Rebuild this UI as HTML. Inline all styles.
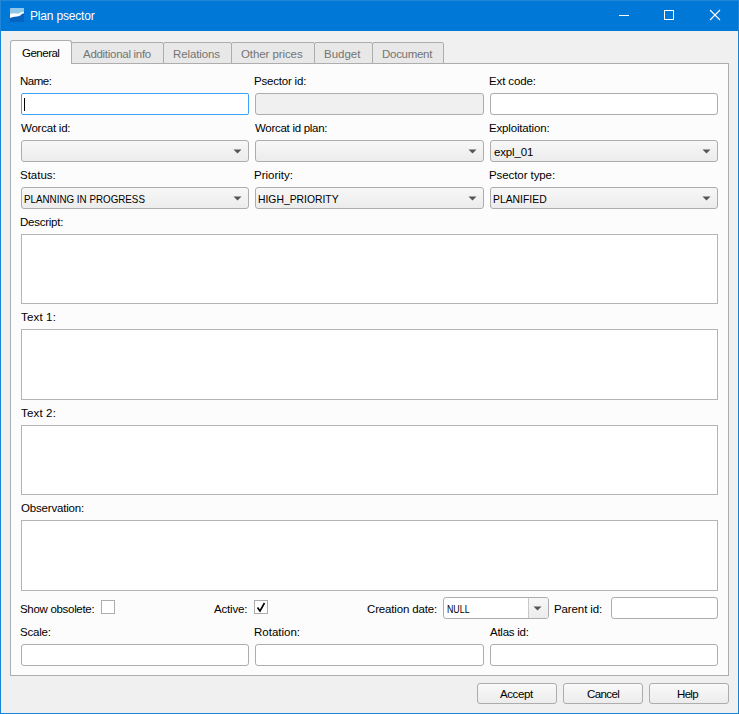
<!DOCTYPE html><html><head><meta charset="utf-8"><style>
html,body{margin:0;padding:0;width:739px;height:714px;overflow:hidden;background:#f0f0f0}
body{position:relative;font-family:"Liberation Sans",sans-serif}
.b{position:absolute;box-sizing:border-box}
.t{position:absolute;white-space:nowrap}
</style></head><body>
<div class="b" style="left:0px;top:0px;width:739px;height:31px;background:#0078d7"></div>
<div class="b" style="left:0px;top:31px;width:739px;height:683px;background:#f0f0f0;border:1px solid #1883d7;border-top:none"></div>
<div class="b" style="left:0px;top:0px;width:739px;height:1px;background:#2188d9"></div>
<div class="b" style="left:0px;top:0px;width:1px;height:31px;background:#2188d9"></div>
<div class="b" style="left:738px;top:0px;width:1px;height:31px;background:#2188d9"></div>
<svg class="b" style="left:9.8px;top:7.9px" width="14.6" height="14" viewBox="0 0 14.6 14"><rect x="0" y="0" width="14.6" height="14" rx="0.6" fill="#0862bf"/><path d="M0.6 0 H14 Q14.6 0 14.6 0.6 V4.6 L11 4.7 C9 5.2,8 6.3,6 5.9 C4 5.5,2 5.6,0 6.3 V0.6 Q0 0 0.6 0 Z" fill="#90c8e8"/><path d="M0 6 C2 5.3,4 5.2,6 5.6 C8 6,9 5,11 4.2 L14.6 3.9 L14.6 5.2 C13 5.2,12 6,11 6.8 C10 7.9,9 8.4,7 8.6 C4 8.8,2 9.5,0 10 Z" fill="#fff"/></svg>
<div class="t" style="left:30.00px;top:9px;font-size:12px;line-height:15px;letter-spacing:-0.182px;color:#fff;">Plan psector</div>
<div class="b" style="left:619px;top:15px;width:10px;height:1px;background:#fff"></div>
<div class="b" style="left:664px;top:10px;width:10px;height:10px;border:1px solid #fff"></div>
<svg class="b" style="left:709px;top:9px" width="12" height="12" viewBox="0 0 12 12"><path d="M1 1L11 11M11 1L1 11" stroke="#fff" stroke-width="1.1"/></svg>
<div class="b" style="left:10px;top:63px;width:719px;height:613px;background:#fcfcfc;border:1px solid #adadad"></div>
<div class="b" style="left:71px;top:42px;width:93px;height:22px;background:#e8e8e8;border:1px solid #adadad;border-radius:2px 2px 0 0"></div>
<div class="b" style="left:163px;top:42px;width:69px;height:22px;background:#e8e8e8;border:1px solid #adadad;border-radius:2px 2px 0 0"></div>
<div class="b" style="left:231px;top:42px;width:84px;height:22px;background:#e8e8e8;border:1px solid #adadad;border-radius:2px 2px 0 0"></div>
<div class="b" style="left:314px;top:42px;width:59px;height:22px;background:#e8e8e8;border:1px solid #adadad;border-radius:2px 2px 0 0"></div>
<div class="b" style="left:372px;top:42px;width:72px;height:22px;background:#e8e8e8;border:1px solid #adadad;border-radius:2px 2px 0 0"></div>
<div class="t" style="left:83.00px;top:47px;font-size:11.5px;line-height:14px;letter-spacing:-0.286px;color:#747474;">Additional info</div>
<div class="t" style="left:173.00px;top:47px;font-size:11.5px;line-height:14px;letter-spacing:-0.125px;color:#747474;">Relations</div>
<div class="t" style="left:241.00px;top:47px;font-size:11.5px;line-height:14px;letter-spacing:-0.091px;color:#747474;">Other prices</div>
<div class="t" style="left:324.00px;top:47px;font-size:11.5px;line-height:14px;letter-spacing:0.000px;color:#747474;">Budget</div>
<div class="t" style="left:382.00px;top:47px;font-size:11.5px;line-height:14px;letter-spacing:-0.286px;color:#747474;">Document</div>
<div class="b" style="left:10px;top:40px;width:62px;height:24px;background:#fcfcfc;border:1px solid #adadad;border-bottom:none;border-radius:3px 3px 0 0"></div>
<div class="t" style="left:22.00px;top:46px;font-size:11.5px;line-height:14px;letter-spacing:-0.500px;color:#000;">General</div>
<div class="t" style="left:20.00px;top:74px;font-size:11.5px;line-height:14px;letter-spacing:-0.500px;color:#000;">Name:</div>
<div class="t" style="left:254.00px;top:74px;font-size:11.5px;line-height:14px;letter-spacing:-0.200px;color:#000;">Psector id:</div>
<div class="t" style="left:489.00px;top:74px;font-size:11.5px;line-height:14px;letter-spacing:-0.125px;color:#000;">Ext code:</div>
<div class="b" style="left:21px;top:93px;width:228px;height:22px;background:#fff;border:1px solid #3ba3ff;border-radius:2px"></div>
<div class="b" style="left:24px;top:98px;width:1px;height:13px;background:#000"></div>
<div class="b" style="left:255px;top:93px;width:229px;height:22px;background:#f0f0f0;border:1px solid #adadad;border-radius:3px"></div>
<div class="b" style="left:490px;top:93px;width:228px;height:22px;background:#fff;border:1px solid #adadad;border-radius:3px"></div>
<div class="t" style="left:21.00px;top:121px;font-size:11.5px;line-height:14px;letter-spacing:-0.222px;color:#000;">Worcat id:</div>
<div class="t" style="left:255.00px;top:121px;font-size:11.5px;line-height:14px;letter-spacing:-0.286px;color:#000;">Worcat id plan:</div>
<div class="t" style="left:489.00px;top:121px;font-size:11.5px;line-height:14px;letter-spacing:-0.167px;color:#000;">Exploitation:</div>
<div class="b" style="left:21px;top:140px;width:228px;height:22px;background:linear-gradient(#f7f7f7,#ececec);border:1px solid #adadad;border-radius:3px"></div>
<svg class="b" style="left:233px;top:148.5px" width="9" height="5" viewBox="0 0 9 5"><path d="M0.5 0.5L8.5 0.5L4.5 4.5Z" fill="#555"/></svg>
<div class="b" style="left:255px;top:140px;width:229px;height:22px;background:linear-gradient(#f7f7f7,#ececec);border:1px solid #adadad;border-radius:3px"></div>
<svg class="b" style="left:468px;top:148.5px" width="9" height="5" viewBox="0 0 9 5"><path d="M0.5 0.5L8.5 0.5L4.5 4.5Z" fill="#555"/></svg>
<div class="b" style="left:490px;top:140px;width:228px;height:22px;background:linear-gradient(#f7f7f7,#ececec);border:1px solid #adadad;border-radius:3px"></div>
<svg class="b" style="left:702px;top:148.5px" width="9" height="5" viewBox="0 0 9 5"><path d="M0.5 0.5L8.5 0.5L4.5 4.5Z" fill="#555"/></svg>
<div class="t" style="left:494.00px;top:145px;font-size:11.5px;line-height:14px;letter-spacing:-0.167px;color:#000;">expl_01</div>
<div class="t" style="left:20.00px;top:168px;font-size:11.5px;line-height:14px;letter-spacing:0.000px;color:#000;">Status:</div>
<div class="t" style="left:254.00px;top:168px;font-size:11.5px;line-height:14px;letter-spacing:0.000px;color:#000;">Priority:</div>
<div class="t" style="left:489.00px;top:168px;font-size:11.5px;line-height:14px;letter-spacing:-0.083px;color:#000;">Psector type:</div>
<div class="b" style="left:21px;top:187px;width:228px;height:22px;background:linear-gradient(#f7f7f7,#ececec);border:1px solid #adadad;border-radius:3px"></div>
<svg class="b" style="left:233px;top:195.5px" width="9" height="5" viewBox="0 0 9 5"><path d="M0.5 0.5L8.5 0.5L4.5 4.5Z" fill="#555"/></svg>
<div class="b" style="left:255px;top:187px;width:229px;height:22px;background:linear-gradient(#f7f7f7,#ececec);border:1px solid #adadad;border-radius:3px"></div>
<svg class="b" style="left:468px;top:195.5px" width="9" height="5" viewBox="0 0 9 5"><path d="M0.5 0.5L8.5 0.5L4.5 4.5Z" fill="#555"/></svg>
<div class="b" style="left:490px;top:187px;width:228px;height:22px;background:linear-gradient(#f7f7f7,#ececec);border:1px solid #adadad;border-radius:3px"></div>
<svg class="b" style="left:702px;top:195.5px" width="9" height="5" viewBox="0 0 9 5"><path d="M0.5 0.5L8.5 0.5L4.5 4.5Z" fill="#555"/></svg>
<div class="t" style="left:24.00px;top:192px;font-size:11.5px;line-height:14px;letter-spacing:0.000px;color:#000;transform:scaleX(0.8526);transform-origin:0 0;">PLANNING IN PROGRESS</div>
<div class="t" style="left:258.00px;top:192px;font-size:11.5px;line-height:14px;letter-spacing:0.000px;color:#000;transform:scaleX(0.9012);transform-origin:0 0;">HIGH_PRIORITY</div>
<div class="t" style="left:493.00px;top:192px;font-size:11.5px;line-height:14px;letter-spacing:0.000px;color:#000;transform:scaleX(0.9027);transform-origin:0 0;">PLANIFIED</div>
<div class="t" style="left:20.00px;top:215px;font-size:11.5px;line-height:14px;letter-spacing:-0.250px;color:#000;">Descript:</div>
<div class="b" style="left:21px;top:234px;width:697px;height:70px;background:#fff;border:1px solid #b4b4b4"></div>
<div class="t" style="left:21.00px;top:310px;font-size:11.5px;line-height:14px;letter-spacing:0.167px;color:#000;">Text 1:</div>
<div class="b" style="left:21px;top:329px;width:697px;height:71px;background:#fff;border:1px solid #b4b4b4"></div>
<div class="t" style="left:21.00px;top:406px;font-size:11.5px;line-height:14px;letter-spacing:0.167px;color:#000;">Text 2:</div>
<div class="b" style="left:21px;top:425px;width:697px;height:70px;background:#fff;border:1px solid #b4b4b4"></div>
<div class="t" style="left:21.00px;top:501px;font-size:11.5px;line-height:14px;letter-spacing:-0.182px;color:#000;">Observation:</div>
<div class="b" style="left:21px;top:520px;width:697px;height:71px;background:#fff;border:1px solid #b4b4b4"></div>
<div class="t" style="left:20.00px;top:602px;font-size:11.5px;line-height:14px;letter-spacing:-0.308px;color:#000;">Show obsolete:</div>
<div class="b" style="left:101px;top:600px;width:14px;height:14px;background:#fff;border:1px solid #adadad"></div>
<div class="t" style="left:214.00px;top:602px;font-size:11.5px;line-height:14px;letter-spacing:-0.167px;color:#000;">Active:</div>
<div class="b" style="left:254px;top:600px;width:14px;height:14px;background:#fff;border:1px solid #adadad"></div>
<svg class="b" style="left:254px;top:600px" width="14" height="14" viewBox="0 0 14 14"><path d="M3.5 7.5L6 11L10.5 3" fill="none" stroke="#000" stroke-width="1.6"/></svg>
<div class="t" style="left:367.00px;top:602px;font-size:11.5px;line-height:14px;letter-spacing:-0.154px;color:#000;">Creation date:</div>
<div class="b" style="left:443px;top:597px;width:106px;height:22px;background:#fff;border:1px solid #adadad;border-radius:3px"></div>
<div class="b" style="left:528px;top:598px;width:20px;height:20px;background:linear-gradient(#f7f7f7,#ececec);border-left:1px solid #c8c8c8;border-radius:0 2px 2px 0"></div>
<svg class="b" style="left:532.5px;top:605.5px" width="9" height="5" viewBox="0 0 9 5"><path d="M0.5 0.5L8.5 0.5L4.5 4.5Z" fill="#555"/></svg>
<div class="t" style="left:447.00px;top:602px;font-size:11.5px;line-height:14px;letter-spacing:0.000px;color:#000;transform:scaleX(0.7667);transform-origin:0 0;">NULL</div>
<div class="t" style="left:554.00px;top:602px;font-size:11.5px;line-height:14px;letter-spacing:-0.111px;color:#000;">Parent id:</div>
<div class="b" style="left:611px;top:597px;width:107px;height:22px;background:#fff;border:1px solid #adadad;border-radius:3px"></div>
<div class="t" style="left:20.00px;top:625px;font-size:11.5px;line-height:14px;letter-spacing:-0.200px;color:#000;">Scale:</div>
<div class="t" style="left:254.00px;top:625px;font-size:11.5px;line-height:14px;letter-spacing:0.000px;color:#000;">Rotation:</div>
<div class="t" style="left:490.00px;top:625px;font-size:11.5px;line-height:14px;letter-spacing:-0.250px;color:#000;">Atlas id:</div>
<div class="b" style="left:21px;top:644px;width:228px;height:22px;background:#fff;border:1px solid #adadad;border-radius:3px"></div>
<div class="b" style="left:255px;top:644px;width:229px;height:22px;background:#fff;border:1px solid #adadad;border-radius:3px"></div>
<div class="b" style="left:490px;top:644px;width:228px;height:22px;background:#fff;border:1px solid #adadad;border-radius:3px"></div>
<div class="b" style="left:477px;top:683px;width:80px;height:21px;background:linear-gradient(#f9f9f9,#ececec);border:1px solid #adadad;border-radius:3px"></div>
<div class="b" style="left:563px;top:683px;width:80px;height:21px;background:linear-gradient(#f9f9f9,#ececec);border:1px solid #adadad;border-radius:3px"></div>
<div class="b" style="left:649px;top:683px;width:80px;height:21px;background:linear-gradient(#f9f9f9,#ececec);border:1px solid #adadad;border-radius:3px"></div>
<div class="t" style="left:500.00px;top:687px;font-size:11.5px;line-height:14px;letter-spacing:-0.400px;color:#000;">Accept</div>
<div class="t" style="left:587.00px;top:687px;font-size:11.5px;line-height:14px;letter-spacing:-0.600px;color:#000;">Cancel</div>
<div class="t" style="left:677.00px;top:687px;font-size:11.5px;line-height:14px;letter-spacing:-0.667px;color:#000;">Help</div>
</body></html>
